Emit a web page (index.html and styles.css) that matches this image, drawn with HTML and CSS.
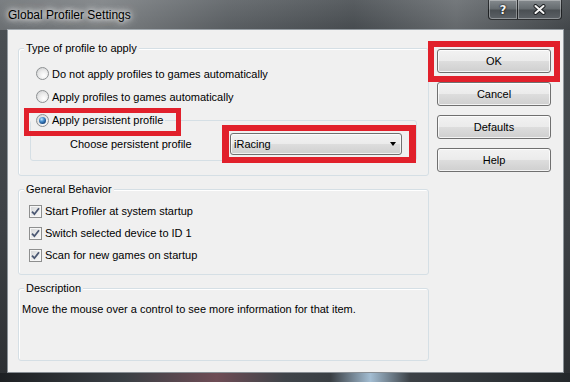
FILE: index.html
```html
<!DOCTYPE html>
<html lang="en">
<head>
<meta charset="utf-8">
<title>Global Profiler Settings</title>
<link rel="stylesheet" href="styles.css">
</head>
<body>
<div class="window">
  <div class="titlebar">
    <span class="title">Global Profiler Settings</span>
    <div class="caption">
      <span class="cap-btn cap-help">?</span>
      <span class="cap-btn cap-close">
        <svg width="13" height="11" viewBox="0 0 13 11">
          <path d="M2.5 2 L10.5 9 M10.5 2 L2.5 9" stroke="#1c1f22" stroke-width="4" stroke-linecap="round"/>
          <path d="M2.5 2 L10.5 9 M10.5 2 L2.5 9" stroke="#f4f4f4" stroke-width="2.1" stroke-linecap="round"/>
        </svg>
      </span>
    </div>
  </div>
  <div class="client">
    <div class="main">
      <fieldset class="group">
        <legend class="group-title">Type of profile to apply</legend>
        <div class="options">
          <label class="opt"><span class="radio"></span>Do not apply profiles to games automatically</label>
          <label class="opt"><span class="radio"></span>Apply profiles to games automatically</label>
          <fieldset class="subgroup">
            <legend class="opt sub-title"><span class="radio on"></span>Apply persistent profile</legend>
            <div class="choose">
              <span class="choose-label">Choose persistent profile</span>
              <div class="combo"><span>iRacing</span><span class="arrow"></span></div>
            </div>
          </fieldset>
        </div>
      </fieldset>
      <fieldset class="group spaced">
        <legend class="group-title">General Behavior</legend>
        <div class="checks">
          <label class="chk"><span class="check"><svg width="9" height="9" viewBox="0 0 9 9"><path d="M1 4.6 L3.4 7.2 L8 1.3" fill="none" stroke="#4b5873" stroke-width="1.8"/></svg></span>Start Profiler at system startup</label>
          <label class="chk"><span class="check"><svg width="9" height="9" viewBox="0 0 9 9"><path d="M1 4.6 L3.4 7.2 L8 1.3" fill="none" stroke="#4b5873" stroke-width="1.8"/></svg></span>Switch selected device to ID 1</label>
          <label class="chk"><span class="check"><svg width="9" height="9" viewBox="0 0 9 9"><path d="M1 4.6 L3.4 7.2 L8 1.3" fill="none" stroke="#4b5873" stroke-width="1.8"/></svg></span>Scan for new games on startup</label>
        </div>
      </fieldset>
      <fieldset class="group spaced">
        <legend class="group-title">Description</legend>
        <div class="desc">Move the mouse over a control to see more information for that item.</div>
      </fieldset>
    </div>
    <div class="buttons">
      <div class="btn">OK</div>
      <div class="btn">Cancel</div>
      <div class="btn">Defaults</div>
      <div class="btn">Help</div>
    </div>
  </div>
  <div class="mark mark-radio"></div>
  <div class="mark mark-combo"></div>
  <div class="mark mark-ok"></div>
</div>
</body>
</html>
```
FILE: styles.css
```css
html, body {
  margin: 0;
  padding: 0;
}
body {
  width: 570px;
  height: 382px;
  overflow: hidden;
  font-family: "Liberation Sans", Arial, sans-serif;
  font-size: 11px;
  color: #000;
  background: #33373a;
}
.window {
  position: relative;
  height: 382px;
  box-sizing: border-box;
  padding: 0 7px 10px 8px;
  display: flex;
  flex-direction: column;
  background:
    linear-gradient(90deg, #1d2023 0, #3b4045 22%, #6e4c55 38%, #3f4449 50%, #3a3f44 58%, #a3bdd2 65%, #3b4045 72%, #24282b 100%) bottom / 100% 9px no-repeat,
    linear-gradient(180deg, #5e6367 0, #4a4f53 30px, #3d4145 60%, #2c2f32 100%);
}
.titlebar {
  height: 30px;
  margin: 0 -7px 0 -8px;
  padding-left: 8px;
  display: flex;
  align-items: center;
  background: linear-gradient(90deg, rgba(255,255,255,0.18) 0, rgba(255,255,255,0.26) 18%, rgba(255,255,255,0.08) 40%, rgba(0,0,0,0.05) 62%, rgba(255,255,255,0.14) 80%, rgba(0,0,0,0.12) 100%);
}
.title {
  font-size: 12px;
  color: #000;
  text-shadow: 0 0 5px #fff, 0 0 9px rgba(255,255,255,0.85), 0 0 12px rgba(255,255,255,0.6);
}
.caption {
  margin-left: auto;
  margin-right: 8px;
  align-self: flex-start;
  display: flex;
}
.cap-btn {
  height: 20px;
  box-sizing: border-box;
  display: flex;
  align-items: center;
  justify-content: center;
  border: 1px solid rgba(10,12,14,0.7);
  border-top: none;
  box-shadow: inset 0 0 0 1px rgba(255,255,255,0.32);
  background: linear-gradient(180deg, #858a8e 0, #646a6e 48%, #4a4f53 52%, #5c6166 100%);
  color: #f4f4f4;
}
.cap-help {
  width: 30px;
  border-radius: 0 0 0 4px;
  font-family: "DejaVu Sans", sans-serif;
  font-weight: bold;
  font-size: 12px;
  text-shadow: 0 0 2px #000, 0 0 1px #000;
}
.cap-close {
  width: 44px;
  border-left: none;
  border-radius: 0 0 4px 0;
}
.client {
  flex: 1;
  display: flex;
  background: #f0f0f0;
  box-shadow: 0 0 0 1px rgba(210,218,225,0.55);
}
.main {
  width: 411px;
  margin-left: 10px;
  padding-top: 11px;
}
.group {
  margin: 0;
  padding: 0;
  min-width: 0;
  border: 1px solid #d5dfe5;
  border-radius: 3px;
  box-shadow: inset 1px 1px 0 #fff;
}
.spaced {
  margin-top: 6px;
}
.group-title {
  margin-left: 5px;
  padding: 0 2px;
  line-height: 14px;
  background: #f0f0f0;
}
.options {
  padding: 7px 11px 14px 11px;
}
.opt {
  display: flex;
  align-items: center;
  height: 23px;
  padding-left: 6px;
}
.radio {
  position: relative;
  flex: none;
  width: 13px;
  height: 13px;
  box-sizing: border-box;
  margin-right: 3px;
  border-radius: 50%;
  border: 1px solid #8d9092;
  background: radial-gradient(circle at 62% 68%, #ffffff 0, #ececec 45%, #c9cbcd 100%);
}
.radio.on::after {
  content: "";
  position: absolute;
  left: 2px;
  top: 2px;
  width: 7px;
  height: 7px;
  border-radius: 50%;
  background: radial-gradient(circle at 38% 32%, #c4e8ff 0, #4a90cf 35%, #14457f 75%, #1b3e68 100%);
}
.subgroup {
  margin: 5px 0 0 0;
  padding: 0;
  min-width: 0;
  border: 1px solid #d5dfe5;
  border-radius: 3px;
}
.sub-title {
  height: 14px;
  margin-left: 0;
  padding: 0 2px 0 5px;
}
.choose {
  display: flex;
  align-items: center;
  padding: 6px 0 5px 0;
}
.choose-label {
  width: 199px;
  box-sizing: border-box;
  padding-left: 39px;
}
.combo {
  width: 172px;
  height: 22px;
  box-sizing: border-box;
  display: flex;
  align-items: center;
  justify-content: space-between;
  padding: 0 5px 0 3px;
  border: 1px solid #707070;
  border-radius: 3px;
  background: linear-gradient(180deg, #f2f2f2 0, #ebebeb 50%, #dddddd 51%, #cfcfcf 100%);
  box-shadow: inset 0 0 0 1px rgba(255,255,255,0.7);
}
.arrow {
  width: 0;
  height: 0;
  border-top: 4px solid #000;
  border-left: 3.5px solid transparent;
  border-right: 3.5px solid transparent;
}
.checks {
  padding: 4px 0 8px 10px;
}
.chk {
  display: flex;
  align-items: center;
  height: 22px;
}
.check {
  flex: none;
  display: flex;
  align-items: center;
  justify-content: center;
  width: 13px;
  height: 13px;
  box-sizing: border-box;
  margin-right: 3px;
  border: 1px solid #8e8f8f;
  background: linear-gradient(135deg, #d2d4d6 0, #eeeeee 60%, #f8f8f8 100%);
  box-shadow: inset 0 0 0 1px #f6f6f6;
}
.desc {
  padding: 7px 3px 44px 3px;
  line-height: 14px;
}
.buttons {
  width: 114px;
  margin-left: 8px;
  padding-top: 19px;
  display: flex;
  flex-direction: column;
  gap: 9px;
}
.btn {
  height: 24px;
  box-sizing: border-box;
  display: flex;
  align-items: center;
  justify-content: center;
  border: 1px solid #707070;
  border-radius: 3px;
  background: linear-gradient(180deg, #f2f2f2 0, #ebebeb 50%, #dddddd 51%, #cfcfcf 100%);
  box-shadow: inset 0 0 0 1px rgba(255,255,255,0.75);
}
.mark {
  position: absolute;
  box-sizing: border-box;
  border: 5px solid #e1202b;
}
.mark-radio {
  left: 24px;
  top: 108px;
  width: 157px;
  height: 28px;
}
.mark-combo {
  left: 222px;
  top: 125px;
  width: 194px;
  height: 38px;
  border-width: 6px 7px;
}
.mark-ok {
  left: 428px;
  top: 41px;
  width: 132px;
  height: 41px;
  border-width: 6px;
}
```
